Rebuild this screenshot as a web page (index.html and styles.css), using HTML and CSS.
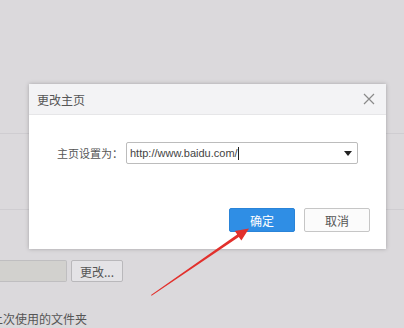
FILE: index.html
```html
<!DOCTYPE html>
<html lang="zh-CN">
<head>
  <meta charset="UTF-8">
  <title>更改主页</title>
  <link rel="stylesheet" href="styles.css">
</head>
<body>
  <div class="screen">
    <div class="page">
      <div class="block block-top"></div>
      <div class="block block-mid"></div>
      <div class="folder-row">
        <div class="folder-input"></div>
        <button class="btn-change">更改...</button>
      </div>
      <div class="last-used">上次使用的文件夹</div>
    </div>

    <div class="dialog">
      <div class="dlg-title">
        <span>更改主页</span>
        <svg class="dlg-close" width="12" height="12" viewBox="0 0 12 12">
          <path d="M1 1 L11 11 M11 1 L1 11" stroke="#8a8a8a" stroke-width="1.2" fill="none"/>
        </svg>
      </div>
      <div class="dlg-body">
        <div class="field">
          <span class="field-label">主页设置为：</span>
          <div class="select">
            <span class="select-text">http://www.baidu.com/</span><span class="caret"></span>
            <svg class="select-arrow" width="8" height="5" viewBox="0 0 8 5">
              <path d="M0 0 L8 0 L4 5 Z" fill="#222"/>
            </svg>
          </div>
        </div>
        <div class="actions">
          <button class="btn btn-ok">确定</button>
          <button class="btn btn-cancel">取消</button>
        </div>
      </div>
    </div>

    <svg class="arrow" width="404" height="328" viewBox="0 0 404 328">
      <polygon points="151,295 237.2,234.5 234.8,231 249,228.5 241.4,240.6 238.8,236.9 151.6,295.8" fill="#e2302c"/>
    </svg>
  </div>
</body>
</html>
```

FILE: styles.css
```css
body { margin: 0; background: #dbd9dc; font-family: "Noto Sans CJK SC", "Liberation Sans", sans-serif; }
.screen { position: relative; width: 404px; height: 328px; overflow: hidden; background: #dbd9dc; }

/* settings page behind the dialog */
.page { display: flex; flex-direction: column; }
.block-top { height: 133px; border-bottom: 1px solid #cfcdd1; }
.block-mid { height: 75px; border-bottom: 1px solid #cfcdd1; }
.folder-row { display: flex; gap: 4px; margin-top: 50px; height: 21px; }
.folder-input { width: 66px; height: 20px; background: #d2d1ce; border: 1px solid #bfbec0; border-left: none; border-radius: 0 2px 2px 0; }
.btn-change {
  width: 52px; height: 22px; padding: 0;
  background: #e4e3e6; border: 1px solid #b9b8bb; border-radius: 2px;
  font-family: inherit; font-size: 12px; color: #555;
}
.last-used { margin-top: 29px; font-size: 12px; color: #555; text-indent: -9px; white-space: nowrap; }

/* dialog */
.dialog {
  position: absolute; left: 29px; top: 84px; width: 357px; height: 165px;
  background: #fff; box-shadow: 0 0 4px rgba(0,0,0,0.25);
  display: flex; flex-direction: column;
}
.dlg-title {
  height: 30px; background: #f3f3f5; border-bottom: 1px solid #e6e6e8;
  display: flex; align-items: center; justify-content: space-between;
  padding: 0 11px 0 8px; font-size: 12px; color: #555;
}
.dlg-close { display: block; }
.dlg-body { flex: 1; display: flex; flex-direction: column; padding: 27px 16px 0 28px; }
.field { display: flex; align-items: center; gap: 3px; }
.field-label { font-size: 11px; color: #555; }
.select {
  flex: 1; height: 20px; border: 1px solid #bcbcbc; border-radius: 2px; margin-right: 12px;
  display: flex; align-items: center; padding-left: 3px; position: relative;
  font-family: "Liberation Sans", sans-serif; font-size: 11px; color: #444;
}
.caret { display: inline-block; width: 1px; height: 13px; background: #222; }
.select-arrow { position: absolute; right: 5px; top: 8px; }
.actions { display: flex; justify-content: flex-end; gap: 9px; margin-top: 44px; }
.btn { width: 66px; height: 24px; padding: 0; font-family: inherit; font-size: 12px; border-radius: 2px; }
.btn-ok { background: #2f8ee5; color: #fff; border: 1px solid #2a84d8; }
.btn-cancel { background: #fbfbfb; color: #555; border: 1px solid #c6c6c6; }

.arrow { position: absolute; left: 0; top: 0; pointer-events: none; }
```
